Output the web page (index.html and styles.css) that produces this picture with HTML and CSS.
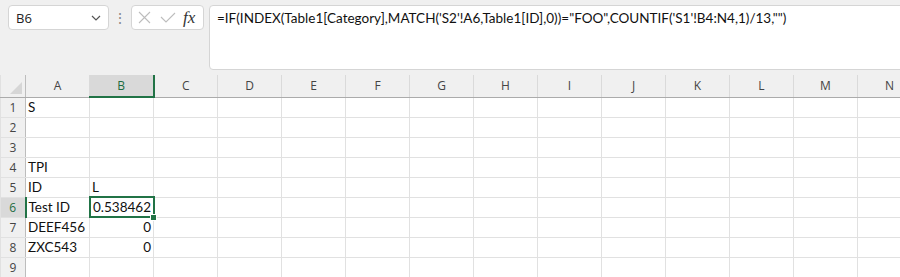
FILE: index.html
```html
<!DOCTYPE html>
<html>
<head>
    <title>Book1 - Excel</title>
    <link rel="stylesheet" href="styles.css">
</head>
<body>
    <div class="toolbar">
        <div class="name-box">
            <span>B6</span>
            <svg class="chevron" width="10" height="6" viewBox="0 0 10 6"><path d="M1 1 L5 5 L9 1" fill="none" stroke="#555" stroke-width="1.2"/></svg>
        </div>
        <div class="grip">&#8942;</div>
        <div class="fx-box">
            <svg width="13" height="13" viewBox="0 0 13 13"><path d="M1 1 L12 12 M12 1 L1 12" stroke="#bdbdbd" stroke-width="1.1"/></svg>
            <svg width="16" height="11" viewBox="0 0 16 11"><path d="M1 5 L6 10 L15 1" fill="none" stroke="#bdbdbd" stroke-width="1.1"/></svg>
            <span class="fx">fx</span>
        </div>
        <div class="formula-bar">=IF(INDEX(Table1[Category],MATCH('S2'!A6,Table1[ID],0))="FOO",COUNTIF('S1'!B4:N4,1)/13,"")</div>
    </div>

    <table class="sheet">
        <colgroup>
            <col class="row-col">
            <col><col><col><col><col><col><col><col><col><col><col><col><col><col>
        </colgroup>
        <tr class="col-heads">
            <th class="corner"><span class="corner-tri"></span></th>
            <th>A</th><th class="active">B</th><th>C</th><th>D</th><th>E</th><th>F</th><th>G</th>
            <th>H</th><th>I</th><th>J</th><th>K</th><th>L</th><th>M</th><th>N</th>
        </tr>
        <tr><th>1</th><td>S</td><td></td><td></td><td></td><td></td><td></td><td></td><td></td><td></td><td></td><td></td><td></td><td></td><td></td></tr>
        <tr><th>2</th><td></td><td></td><td></td><td></td><td></td><td></td><td></td><td></td><td></td><td></td><td></td><td></td><td></td><td></td></tr>
        <tr><th>3</th><td></td><td></td><td></td><td></td><td></td><td></td><td></td><td></td><td></td><td></td><td></td><td></td><td></td><td></td></tr>
        <tr><th>4</th><td>TPI</td><td></td><td></td><td></td><td></td><td></td><td></td><td></td><td></td><td></td><td></td><td></td><td></td><td></td></tr>
        <tr><th>5</th><td>ID</td><td>L</td><td></td><td></td><td></td><td></td><td></td><td></td><td></td><td></td><td></td><td></td><td></td><td></td></tr>
        <tr><th class="active">6</th><td>Test ID</td><td class="num selected">0.538462<span class="handle"></span></td><td></td><td></td><td></td><td></td><td></td><td></td><td></td><td></td><td></td><td></td><td></td><td></td></tr>
        <tr><th>7</th><td>DEEF456</td><td class="num">0</td><td></td><td></td><td></td><td></td><td></td><td></td><td></td><td></td><td></td><td></td><td></td><td></td></tr>
        <tr><th>8</th><td>ZXC543</td><td class="num">0</td><td></td><td></td><td></td><td></td><td></td><td></td><td></td><td></td><td></td><td></td><td></td><td></td></tr>
        <tr><th>9</th><td></td><td></td><td></td><td></td><td></td><td></td><td></td><td></td><td></td><td></td><td></td><td></td><td></td><td></td></tr>
    </table>
</body>
</html>
```

FILE: styles.css
```css
body {
    margin: 0;
    background-color: #f0f0f0;
    font-family: Lato, "Liberation Sans", sans-serif;
    overflow: hidden;
}

.toolbar {
    display: flex;
    align-items: flex-start;
    height: 75px;
    padding: 5px 0 0 8px;
    box-sizing: border-box;
    background-color: #f0f0f0;
}

.name-box {
    width: 101px;
    height: 25px;
    box-sizing: border-box;
    background-color: #fff;
    border: 1px solid #d5d5d5;
    border-radius: 4px;
    display: flex;
    align-items: center;
    justify-content: space-between;
    padding: 0 7px 0 7px;
    font-family: "Open Sans", sans-serif;
    font-size: 13px;
    color: #222;
}

.grip {
    width: 22px;
    text-align: center;
    color: #888;
    font-size: 14px;
    line-height: 25px;
}

.fx-box {
    width: 73px;
    height: 25px;
    box-sizing: border-box;
    background-color: #fff;
    border: 1px solid #d5d5d5;
    border-radius: 4px;
    display: flex;
    align-items: center;
    gap: 9px;
    padding-left: 6px;
}

.fx {
    font-family: "Liberation Serif", "Times New Roman", serif;
    font-style: italic;
    font-size: 17px;
    color: #333;
    margin-left: -2px;
}

.formula-bar {
    flex: 1;
    height: 65px;
    margin-left: 5px;
    margin-right: -12px;
    box-sizing: border-box;
    background-color: #fff;
    border: 1px solid #d5d5d5;
    border-radius: 4px;
    padding: 4px 0 0 7px;
    font-size: 13.5px;
    color: #111;
    white-space: nowrap;
}

.sheet {
    border-collapse: collapse;
    table-layout: fixed;
    width: 921px;
    background-color: #fff;
}

.sheet col {
    width: 64px;
}

.sheet col.row-col {
    width: 25px;
}

.sheet th,
.sheet td {
    height: 20px;
    padding: 0;
    border: 1px solid #e1e1e1;
    box-sizing: border-box;
    white-space: nowrap;
    overflow: visible;
}

.sheet td {
    font-size: 13.5px;
    color: #111;
    padding-left: 2px;
    position: relative;
}

.sheet td.num {
    text-align: right;
    padding-right: 2px;
}

.sheet th {
    background-color: #f0f0f0;
    font-family: "Open Sans", sans-serif;
    font-weight: normal;
    font-size: 12px;
    color: #444;
    border-right: 1px solid #bdbdbd;
}

.col-heads th {
    height: 22px;
    border-top: none;
    border-right: 1px solid #dadada;
    border-bottom: 1px solid #ababab;
}

.col-heads th.corner {
    border-right: 1px solid #bdbdbd;
    position: relative;
}

.corner-tri {
    position: absolute;
    right: 3px;
    bottom: 3px;
    width: 0;
    height: 0;
    border-left: 12px solid transparent;
    border-bottom: 12px solid #d6d6d6;
}

.sheet th.active {
    background-color: #d9d9d9;
    color: #1e6c41;
}

.col-heads th.active {
    border-bottom: 2px solid #217346;
}

tr th.active {
    border-right: 2px solid #217346;
}

.sheet td.selected {
    outline: 2px solid #217346;
    outline-offset: -1px;
}

.handle {
    position: absolute;
    right: -4px;
    bottom: -4px;
    width: 5px;
    height: 5px;
    background-color: #217346;
    border: 1px solid #fff;
}
```
